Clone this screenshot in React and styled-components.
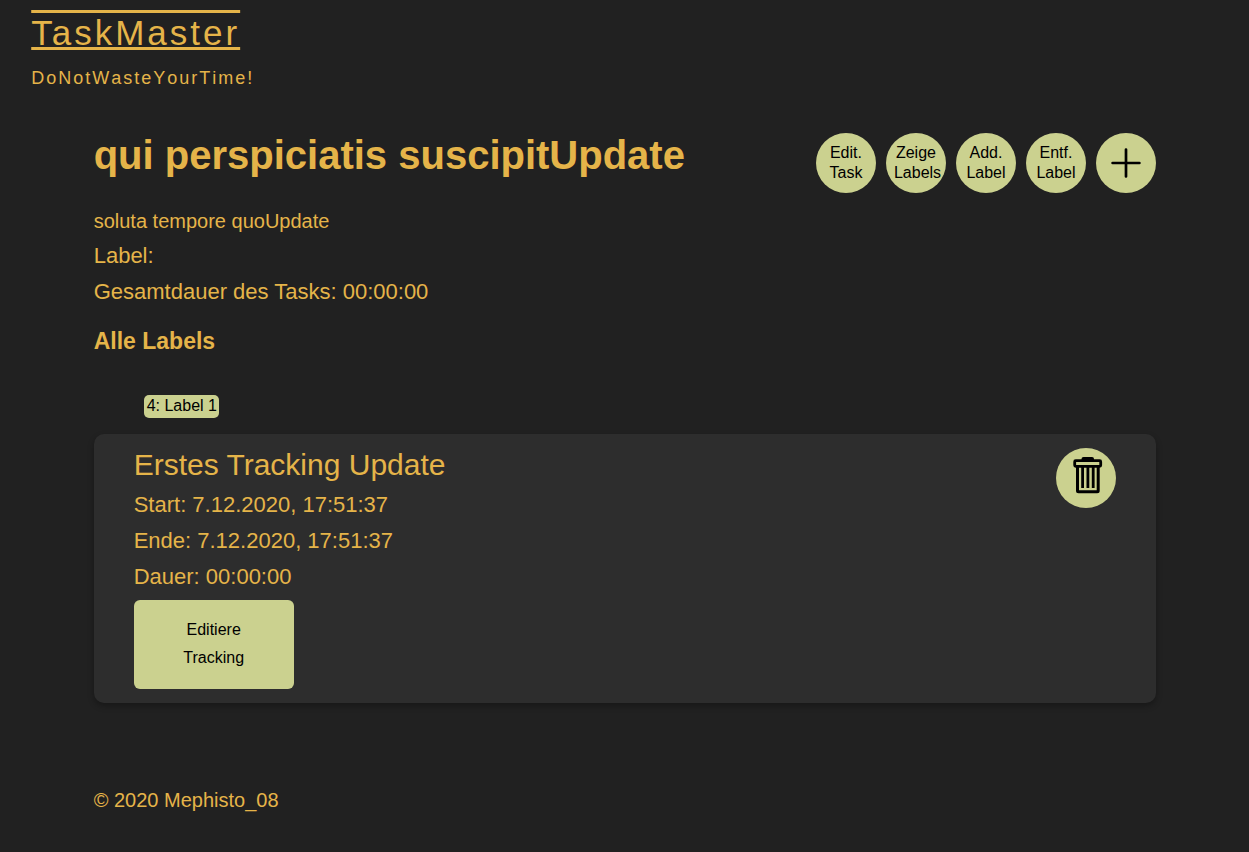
import React from "react";
import styled, { createGlobalStyle } from "styled-components";

const gold = "#e5b449";
const lime = "#cbd18f";

const GlobalStyle = createGlobalStyle`
  * {
    box-sizing: border-box;
  }
  body {
    margin: 0;
    background: #212121;
    color: ${gold};
    font-family: Arial, "Liberation Sans", sans-serif;
    font-size: 22px;
    line-height: 36px;
  }
  h1, h2, h3, p, ul {
    margin: 0;
    padding: 0;
  }
`;

const Header = styled.header`
  padding: 12px 2.5% 0;
`;

const Brand = styled.a`
  display: inline-block;
  color: inherit;
  font-size: 35px;
  line-height: 42px;
  letter-spacing: 3px;
  text-decoration: underline overline;
  text-decoration-thickness: 3px;
  text-decoration-skip-ink: none;
`;

const Slogan = styled.p`
  margin-top: 4px;
  font-size: 18px;
  font-kerning: none;
  letter-spacing: 2px;
`;

const Container = styled.div`
  margin: 0 7.45% 0 7.5%;
`;

const TaskHeader = styled.div`
  display: flex;
  justify-content: space-between;
  align-items: flex-start;
  gap: 20px;
  margin-top: 37px;
`;

const TaskTitle = styled.h1`
  font-size: 40px;
  line-height: 44px;
`;

const Actions = styled.div`
  display: flex;
  gap: 10px;
`;

const RoundButton = styled.button`
  display: flex;
  flex: none;
  align-items: center;
  justify-content: center;
  width: 60px;
  height: 60px;
  padding: 0 8px;
  border: 0;
  border-radius: 50%;
  background: ${lime};
  color: #000;
  font: 16px/20px Arial, "Liberation Sans", sans-serif;
  text-align: center;
  cursor: pointer;

  span {
    width: 100%;
  }
`;

const Description = styled.p`
  margin-top: 11px;
  font-size: 20px;
  line-height: 34px;
`;

const Line = styled.p`
  font-size: 22px;
`;

const SectionTitle = styled.h3`
  margin-top: 13px;
  font-size: 23px;
`;

const LabelList = styled.ul`
  display: flex;
  gap: 10px;
  margin: 36px 0 16px;
  padding: 0 50px;
  list-style: none;
`;

const Label = styled.li`
  padding: 0 2px 2px 3px;
  border-radius: 5px;
  background: ${lime};
  color: #000;
  font-size: 16px;
  line-height: 21px;
`;

const Card = styled.article`
  display: flex;
  justify-content: space-between;
  align-items: flex-start;
  padding: 14px 40px;
  border-radius: 10px;
  background: #2d2d2d;
  box-shadow: 0 3px 6px rgba(0, 0, 0, 0.3);
`;

const CardTitle = styled.h2`
  margin-bottom: 5px;
  font-size: 30px;
  font-weight: 400;
  line-height: 34px;
`;

const EditButton = styled.button`
  display: block;
  width: 160px;
  margin-top: 5px;
  padding: 16px 40px 17px;
  border: 0;
  border-radius: 6px;
  background: ${lime};
  color: #000;
  font: 16px/28px Arial, "Liberation Sans", sans-serif;
  cursor: pointer;
`;

const Footer = styled.footer`
  padding: 79px 0 34px;
  font-size: 20px;
`;

const PlusIcon = () => (
  <svg width="30" height="30" viewBox="0 0 30 30" aria-hidden="true">
    <path d="M15 1.600v26.800M1.600 15h26.800" stroke="#000" strokeWidth="2.700" strokeLinecap="round" />
  </svg>
);

const TrashIcon = () => (
  <svg width="36" height="46" viewBox="0 0 36 46" fill="none" stroke="#000" aria-hidden="true">
    <path d="M13.500 5V4q0-2 2-2h8.500q2 0 2 2v1z" fill="#000" stroke="none" />
    <rect x="6.700" y="5.700" width="26" height="5.600" rx="1" strokeWidth="2.800" />
    <path d="M9.500 12v23.800q0 1 1 1h18.700q1 0 1-1V12" strokeWidth="3" />
    <path d="M14.600 12v21M19.900 12v21M25.200 12v21" strokeWidth="2.800" />
  </svg>
);

const actions = ["Edit. Task", "Zeige Labels", "Add. Label", "Entf. Label"];

export default function App() {
  return (
    <>
      <GlobalStyle />
      <Header>
        <Brand href="#">TaskMaster</Brand>
        <Slogan>DoNotWasteYourTime!</Slogan>
      </Header>
      <Container>
        <main>
          <TaskHeader>
            <TaskTitle>qui perspiciatis suscipitUpdate</TaskTitle>
            <Actions>
              {actions.map((text) => (
                <RoundButton type="button" key={text}>
                  <span>{text}</span>
                </RoundButton>
              ))}
              <RoundButton type="button" aria-label="Tracking hinzufügen">
                <PlusIcon />
              </RoundButton>
            </Actions>
          </TaskHeader>
          <Description>soluta tempore quoUpdate</Description>
          <Line>Label:</Line>
          <Line>Gesamtdauer des Tasks: 00:00:00</Line>
          <SectionTitle>Alle Labels</SectionTitle>
          <LabelList>
            <Label>4: Label 1</Label>
          </LabelList>
          <Card>
            <div>
              <CardTitle>Erstes Tracking Update</CardTitle>
              <Line>Start: 7.12.2020, 17:51:37</Line>
              <Line>Ende: 7.12.2020, 17:51:37</Line>
              <Line>Dauer: 00:00:00</Line>
              <EditButton type="button">Editiere Tracking</EditButton>
            </div>
            <RoundButton type="button" aria-label="Tracking löschen">
              <TrashIcon />
            </RoundButton>
          </Card>
        </main>
        <Footer>© 2020 Mephisto_08</Footer>
      </Container>
    </>
  );
}
